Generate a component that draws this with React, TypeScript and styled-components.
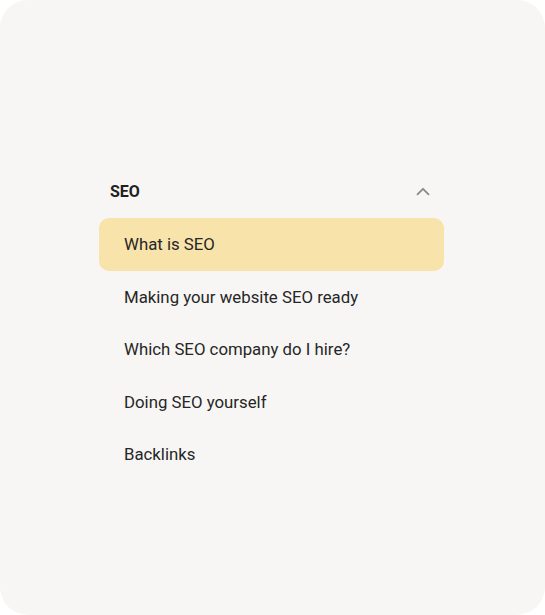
import { FC } from 'react';
import styled, { createGlobalStyle } from 'styled-components';

const Global = createGlobalStyle`
  html, body { margin: 0; padding: 0; background: #ffffff; }
  body { font-family: Roboto, "Liberation Sans", sans-serif; }
`

const Card = styled.main`
  width: 545px;
  height: 615px;
  box-sizing: border-box;
  padding: 171px 0 0 99px;
  background: #f7f6f4;
  border-radius: 28px;
`

const Section = styled.section`
  width: 345px;
  display: flex;
  flex-direction: column;
`

const Header = styled.button`
  height: 40px;
  margin-bottom: 7px;
  padding: 0 14px 0 11px;
  border: 0;
  background: none;
  display: flex;
  align-items: center;
  justify-content: space-between;
  font: 700 16px Roboto, "Liberation Sans", sans-serif;
  color: #1f1f1f;
  cursor: pointer;
`

const List = styled.ul`
  list-style: none;
  margin: 0;
  padding: 0;
`

const Item = styled.li<{ $active?: boolean }>`
  height: 52.5px;
  padding-left: 25px;
  display: flex;
  align-items: center;
  border-radius: 10px;
  background: ${p => (p.$active ? '#f8e3aa' : 'transparent')};
  font: 400 16.8px Roboto, "Liberation Sans", sans-serif;
  color: #262626;
`

const Chevron: FC = () => (
  <svg width="14" height="14" viewBox="0 0 14 14" fill="none">
    <path d="M1.5 10.3 L7 4.8 L12.5 10.3" stroke="#8a8a8a" strokeWidth="1.8" strokeLinecap="round" strokeLinejoin="round" />
  </svg>
)

const topics = [
  'What is SEO',
  'Making your website SEO ready',
  'Which SEO company do I hire?',
  'Doing SEO yourself',
  'Backlinks',
]

export default function App() {
  return (
    <>
      <Global />
      <Card>
        <Section>
          <Header>
            <span>SEO</span>
            <Chevron />
          </Header>
          <List>
            {topics.map((t, i) => (
              <Item key={t} $active={i === 0}>{t}</Item>
            ))}
          </List>
        </Section>
      </Card>
    </>
  )
}
